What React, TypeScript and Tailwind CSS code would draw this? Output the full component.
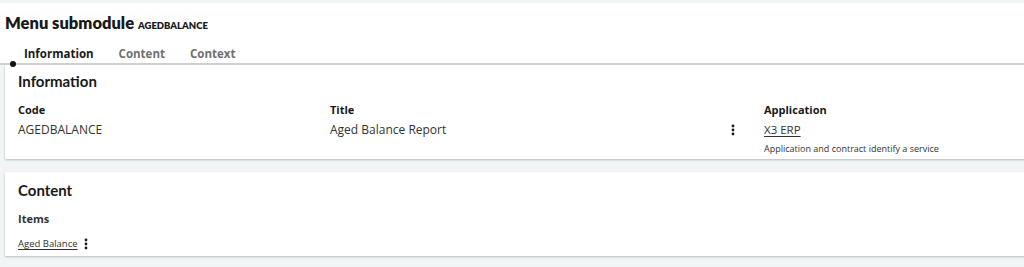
import React from "react";

const Kebab = ({ className = "" }: { className?: string }) => (
  <svg width="4" height="12" viewBox="0 0 4 12" className={className}>
    <circle cx="2" cy="2" r="1.4" fill="#1a1a1a" />
    <circle cx="2" cy="6" r="1.4" fill="#1a1a1a" />
    <circle cx="2" cy="10" r="1.4" fill="#1a1a1a" />
  </svg>
);

const heading = { fontFamily: "Lato, 'Open Sans', sans-serif" };
const body = { fontFamily: "'Open Sans', 'Noto Sans', sans-serif" };

export default function App() {
  return (
    <div className="w-[1024px] h-[267px] overflow-hidden bg-[#f2f5f6] pt-[3px]" style={body}>
      <div className="bg-white relative">
        <div className="pl-[5px] pt-[9px] h-[31px] flex items-baseline gap-[4px]" style={heading}>
          <span className="text-[16.5px] font-extrabold text-[#191919] leading-[22px]">Menu submodule</span>
          <span className="text-[9.5px] font-extrabold text-[#191919]">AGEDBALANCE</span>
        </div>
        <div className="flex pl-[24px] pt-[12px] h-[29px] gap-[25px] text-[11.5px] font-bold leading-[16px]">
          <span className="text-[#1a1a1a]">Information</span>
          <span className="text-[#707070]">Content</span>
          <span className="text-[#707070]">Context</span>
        </div>
        <div className="h-[2px] bg-[#cfcfcf]" />
        <div className="absolute left-[10px] bottom-[-2px] w-[6px] h-[6px] rounded-full bg-[#111]" />
      </div>

      <div className="ml-[5px] mr-[-10px] bg-white h-[94px] shadow-[0_1px_2px_rgba(0,0,0,0.25)] pl-[13px] pt-[6px]">
        <div className="text-[15px] font-bold text-[#191919] leading-[20px]" style={heading}>Information</div>
        <div className="flex mt-[11px]">
          <div className="w-[312px]">
            <div className="text-[11px] font-bold text-[#191919] leading-[15px]">Code</div>
            <div className="text-[12px] text-[#333] leading-[17px] mt-[4px]">AGEDBALANCE</div>
          </div>
          <div className="w-[434px] relative">
            <div className="text-[11px] font-bold text-[#191919] leading-[15px]">Title</div>
            <div className="flex items-center justify-between mt-[4px] pr-[29px]">
              <span className="text-[12px] text-[#333] leading-[17px]">Aged Balance Report</span>
              <Kebab />
            </div>
          </div>
          <div>
            <div className="text-[11px] font-bold text-[#191919] leading-[15px]">Application</div>
            <div className="text-[11.5px] text-[#333] leading-[17px] mt-[4px] underline underline-offset-2">X3 ERP</div>
            <div className="text-[9px] text-[#333] leading-[14px] mt-[4px]">Application and contract identify a service</div>
          </div>
        </div>
      </div>

      <div className="ml-[5px] mr-[-10px] mt-[13px] bg-white h-[84px] shadow-[0_1px_2px_rgba(0,0,0,0.25)] pl-[13px] pt-[8px]">
        <div className="text-[15px] font-bold text-[#191919] leading-[20px]" style={heading}>Content</div>
        <div className="text-[11px] font-bold text-[#333] leading-[15px] mt-[11px]">Items</div>
        <div className="flex items-center gap-[6px] mt-[11px]">
          <span className="text-[9.5px] text-[#333] leading-[14px] underline underline-offset-2">Aged Balance</span>
          <Kebab />
        </div>
      </div>
    </div>
  );
}
